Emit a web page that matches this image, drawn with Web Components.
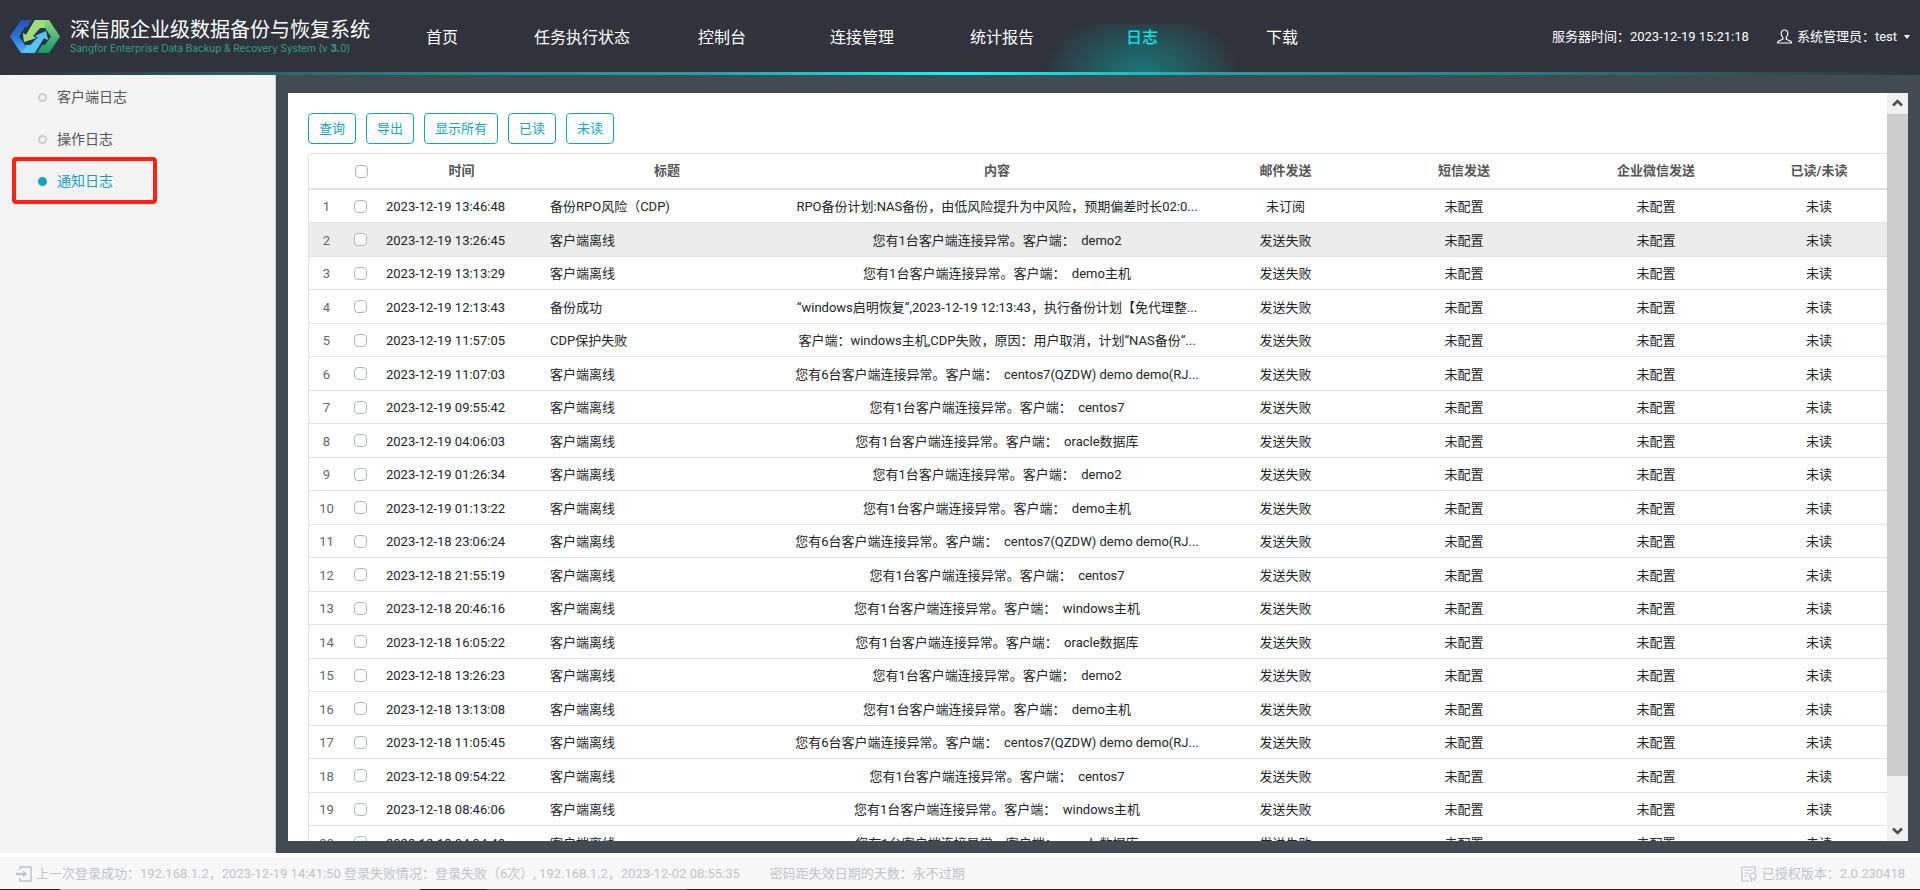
<!DOCTYPE html>
<html lang="zh-CN">
<head>
<meta charset="utf-8">
<title>深信服企业级数据备份与恢复系统</title>
<style>
html, body { height: 100%; margin: 0; }
body { font: 13px/20px Roboto, "Noto Sans CJK SC", sans-serif; color: #212529; overflow: hidden; }
</style>
</head>
<body>
<backup-app></backup-app>

<template id="t-app">
<style>
:host { display: grid; grid-template-rows: 75px minmax(0, 1fr) auto; height: 100%; background: #fff; }
.mid { display: grid; grid-template-columns: 276px minmax(0, 1fr); min-height: 0; }
main { background: #434a51; padding: 18px 12px 13px; display: grid; min-height: 0; }
</style>
<app-header></app-header>
<div class="mid">
  <side-menu></side-menu>
  <main><log-panel></log-panel></main>
</div>
<app-footer></app-footer>
</template>

<template id="t-header">
<style>
:host { display: flex; flex-direction: column; background: #30333b; color: #fff; }
.bar { flex: 1; display: flex; align-items: center; }
.brand { display: flex; align-items: center; width: 372px; padding-left: 10px; box-sizing: border-box; }
.brand svg { margin-right: 10px; flex: none; }
.name { font-size: 20px; line-height: 24px; white-space: nowrap; }
.sub { font: 10px/12px Inter, sans-serif; color: #31a083; white-space: nowrap; }
.sub b { font-weight: 700; }
nav { display: flex; flex: 1; align-self: stretch; }
.right { display: flex; align-items: center; padding: 2px 10px 0 0; white-space: nowrap; }
.user { display: flex; align-items: center; margin-left: 28px; padding: 0; border: 0; background: none; color: inherit; font: inherit; }
.user svg { margin-right: 5px; }
.user i { border: 3px solid transparent; border-top: 4px solid #fff; border-bottom: 0; margin-left: 7px; }
.line { height: 3px; background: linear-gradient(90deg, #30333b 0, #1e8f91 25%, #1fa3a4 37%, #00fff9 50%, #1fa3a4 63%, #1e8f91 75%, #30333b 100%); }
</style>
<div class="bar">
  <div class="brand">
    <svg width="50" height="33" viewBox="0 0 50 33">
      <defs>
        <linearGradient id="b" x1="0" y1="0" x2="0" y2="1"><stop offset="0" stop-color="#1f52b0"/><stop offset=".5" stop-color="#2a75dc"/><stop offset="1" stop-color="#45b5ee"/></linearGradient>
        <linearGradient id="g" x1="0" y1="0" x2="0" y2="1"><stop offset="0" stop-color="#8ed67c"/><stop offset=".5" stop-color="#4fb87c"/><stop offset="1" stop-color="#149a6c"/></linearGradient>
      </defs>
      <path fill="url(#b)" d="M11 0h11l-5 7h-2L9 16.500l6 8.500h5l8-8-4-1 12-5 2 9-4-2-9 15H11L0 16.500z"/>
      <path fill="url(#g)" d="M39 33H27l5-8h3l6-8.500L35 8h-5l-8 8 4 2-12 4-1-9 3 2L25 0h14l11 16.500z"/>
      <path fill="#58c4f5" d="M12 33l5-8h4l7-8-3-1 11-5 2 9-4-2-10 15z"/>
      <path fill="#9bdc7b" d="M25 0h12l-3 8h-4l-7 8 3 2-12 4-1-9 3 2z"/>
    </svg>
    <div><div class="name">深信服企业级数据备份与恢复系统</div>
    <div class="sub">Sangfor Enterprise Data Backup &amp; Recovery System (v <b>3.</b>0)</div></div>
  </div>
  <nav>
    <nav-item>首页</nav-item><nav-item>任务执行状态</nav-item><nav-item>控制台</nav-item><nav-item>连接管理</nav-item><nav-item>统计报告</nav-item><nav-item active>日志</nav-item><nav-item>下载</nav-item>
  </nav>
  <div class="right">
    <span>服务器时间：2023-12-19 15:21:18</span>
    <button class="user" type="button">
      <svg width="15" height="16" viewBox="0 0 15 16" fill="none" stroke="#fff" stroke-width="1.200"><path d="M7.500 1C5.300 1 4 2.500 4.200 4.800c.1 1.500.7 2.700 1.600 3.600v1.800L1.300 12.300c-.5.300-.7.800-.7 1.700h13.800c0-.9-.2-1.400-.7-1.700L9.200 10.200V8.400c.9-.9 1.500-2.100 1.600-3.600C11 2.500 9.700 1 7.500 1z"/></svg>
      系统管理员：test<i></i>
    </button>
  </div>
</div>
<div class="line"></div>
</template>

<template id="t-nav">
<style>
:host { display: flex; width: 140px; justify-content: center; align-items: center; position: relative; font-size: 16px; }
a { color: #fff; text-decoration: none; padding-top: 4px; white-space: nowrap; position: relative; }
:host([active]) a { color: #00e4e4; font-weight: 500; }
:host([active])::before { content: ""; position: absolute; left: -28px; right: -28px; bottom: 0; height: 48px;
  background: radial-gradient(ellipse 98px 60px at 50% 100%, #1c757a 0, #225d61 40%, #2b454c 75%, rgba(48,51,59,0) 100%); }
</style>
<a href="#"><slot></slot></a>
</template>

<template id="t-side">
<style>
:host { display: block; background: #f3f3f3; border-right: 1px solid #ccc; padding-top: 1px; }
</style>
<side-item>客户端日志</side-item><side-item>操作日志</side-item><side-item active>通知日志</side-item>
</template>

<template id="t-sideitem">
<style>
:host { display: block; position: relative; font-size: 14px; }
a { display: flex; align-items: center; height: 42px; padding-left: 38px; color: #555; text-decoration: none; }
i { width: 5px; height: 5px; border: 2px solid #c8d0d6; border-radius: 50%; margin-right: 10px; }
:host([active]) a { color: #17a2b8; }
:host([active]) i { background: #17a2b8; border-color: #17a2b8; }
:host([active])::after { content: ""; position: absolute; left: 12px; top: -3px; width: 137px; height: 39px; border: 4px solid #ff2113; border-radius: 4px; }
</style>
<a href="#"><i></i><slot></slot></a>
</template>

<template id="t-panel">
<style>
:host { display: grid; grid-template-columns: minmax(0, 1fr) 21px; background: #fff; min-height: 0; }
.body { overflow: hidden; padding: 20px 0 0 20px; min-height: 0; }
.tools { display: flex; gap: 10px; margin-bottom: 9px; }
</style>
<div class="body">
  <div class="tools"><tool-button>查询</tool-button><tool-button>导出</tool-button><tool-button>显示所有</tool-button><tool-button>已读</tool-button><tool-button>未读</tool-button></div>
  <log-table></log-table>
</div>
<scroll-bar></scroll-bar>
</template>

<template id="t-button">
<style>
:host { display: block; }
button { height: 31px; padding: 0 10px; border: 1px solid #17a2b8; border-radius: 4px; background: #fff; color: #17a2b8; font: inherit; display: block; }
</style>
<button type="button"><slot></slot></button>
</template>

<template id="t-scroll">
<style>
:host { display: flex; flex-direction: column; background: #f0f0f0; min-height: 0; }
svg { flex: none; display: block; }
.thumb { flex: 662; background: #cdcdcd; }
.rest { flex: 44; }
</style>
<svg width="21" height="21" viewBox="0 0 21 21"><path d="M6 12.500l4.500-4.500 4.500 4.500" fill="none" stroke="#505050" stroke-width="2.600"/></svg>
<div class="thumb"></div><div class="rest"></div>
<svg width="21" height="21" viewBox="0 0 21 21"><path d="M6 8.500l4.500 4.500 4.500-4.500" fill="none" stroke="#505050" stroke-width="2.600"/></svg>
</template>

<template id="t-table">
<style>
:host { display: block; border: 1px solid #dee2e6; border-right: 0; border-radius: 5px 0 0 0; }
table { width: 100%; table-layout: fixed; border-collapse: separate; border-spacing: 0; }
th, td { padding: 2px 0 0; box-sizing: border-box; text-align: center; white-space: nowrap; overflow: hidden; border-bottom: 1px solid #dee2e6; }
th { height: 36px; color: #555; font-weight: 700; border-bottom-width: 2px; padding: 0; }
td { height: 33px; line-height: 18px; }
tr:nth-child(even) td { height: 34px; }
tr.hover td { background: #ececec; }
td:first-child { color: #666; }
td:nth-child(3) { text-align: left; padding-left: 7px; }
td:nth-child(4) { text-align: left; padding-left: 6px; }
input { appearance: none; display: block; width: 13px; height: 13px; margin: 0 auto; border: 1px solid #adb5bd; border-radius: 4px; background: #fff; }
td:nth-child(2) { padding: 0 2px 0 0; }
</style>
<table>
<colgroup><col style="width:35px"><col style="width:35px"><col style="width:165px"><col style="width:246px"><col style="width:414px"><col style="width:163px"><col style="width:194px"><col style="width:190px"><col style="width:136px"></colgroup>
<thead><tr><th></th><th><input type="checkbox" aria-label="全选"></th><th>时间</th><th>标题</th><th>内容</th><th>邮件发送</th><th>短信发送</th><th>企业微信发送</th><th>已读/未读</th></tr></thead>
<tbody></tbody>
</table>
</template>

<template id="t-footer">
<style>
:host { display: block; border-top: 4px solid #fff; margin-top: -1px; color: #c0c4cc; background: #f7f7f7; }
.row { display: flex; align-items: center; box-sizing: border-box; height: 33px; padding: 2px 15px 0 16px; margin-top: -1px; white-space: pre; }
svg { margin-right: 4px; flex: none; }
.days { margin-left: 30px; }
.ver { margin-left: auto; display: flex; align-items: center; }
.edge { height: 1px; background: linear-gradient(90deg, #222 60px, #bbb 60px 420px, #222 420px 486px, #555 486px 686px, #222 686px); }
</style>
<div class="row">
  <svg width="16" height="16" viewBox="0 0 16 16" fill="none" stroke="#c0c4cc" stroke-width="1.500"><path d="M4 4V1h11v14H4v-3"/><path d="M0 8h8" stroke-width="2.400"/><path d="M7 4.500L11.500 8 7 11.500z" fill="#c0c4cc" stroke="none"/></svg><span>上一次登录成功：192.168.1.2，2023-12-19 14:41:50 登录失败情况：登录失败（6次）, 192.168.1.2，2023-12-02 08:55:35</span><span class="days">密码距失效日期的天数：永不过期</span><span class="ver"><svg width="17" height="16" viewBox="0 0 17 16" fill="none" stroke="#c0c4cc" stroke-width="1.200"><path d="M14 6V1H1v14h7M3.500 4h8M3.500 7h4M3.500 10h3"/><circle cx="12" cy="10" r="3"/><path d="M10.500 12.500V15.500M13.500 12.500V15.500"/></svg>已授权版本：2.0.230418</span>
</div>
<div class="edge"></div>
</template>

<script>
const define = (name, id, setup) => customElements.define(name, class extends HTMLElement {
  constructor() {
    super();
    const root = this.attachShadow({ mode: "open" });
    root.append(document.getElementById(id).content.cloneNode(true));
    if (setup) setup(root);
  }
});

const lost = (n, who) => `您有${n}台客户端连接异常。客户端：\u00a0 ${who}`;
const off = "客户端离线", many = "centos7(QZDW) demo demo(RJ...";
const rows = [
  ["2023-12-19 13:46:48", "备份RPO风险（CDP)", "RPO备份计划:NAS备份，由低风险提升为中风险，预期偏差时长02:0...", "未订阅"],
  ["2023-12-19 13:26:45", off, lost(1, "demo2")],
  ["2023-12-19 13:13:29", off, lost(1, "demo主机")],
  ["2023-12-19 12:13:43", "备份成功", "“windows启明恢复“,2023-12-19 12:13:43，执行备份计划【免代理整..."],
  ["2023-12-19 11:57:05", "CDP保护失败", "客户端：windows主机,CDP失败，原因：用户取消，计划“NAS备份“..."],
  ["2023-12-19 11:07:03", off, lost(6, many)],
  ["2023-12-19 09:55:42", off, lost(1, "centos7")],
  ["2023-12-19 04:06:03", off, lost(1, "oracle数据库")],
  ["2023-12-19 01:26:34", off, lost(1, "demo2")],
  ["2023-12-19 01:13:22", off, lost(1, "demo主机")],
  ["2023-12-18 23:06:24", off, lost(6, many)],
  ["2023-12-18 21:55:19", off, lost(1, "centos7")],
  ["2023-12-18 20:46:16", off, lost(1, "windows主机")],
  ["2023-12-18 16:05:22", off, lost(1, "oracle数据库")],
  ["2023-12-18 13:26:23", off, lost(1, "demo2")],
  ["2023-12-18 13:13:08", off, lost(1, "demo主机")],
  ["2023-12-18 11:05:45", off, lost(6, many)],
  ["2023-12-18 09:54:22", off, lost(1, "centos7")],
  ["2023-12-18 08:46:06", off, lost(1, "windows主机")],
  ["2023-12-18 04:04:48", off, lost(1, "oracle数据库")]
];

define("nav-item", "t-nav");
define("app-header", "t-header");
define("side-item", "t-sideitem");
define("side-menu", "t-side");
define("tool-button", "t-button");
define("scroll-bar", "t-scroll");
define("log-table", "t-table", root => {
  root.querySelector("tbody").innerHTML = rows.map(([time, title, text, mail = "发送失败"], i) =>
    `<tr${i === 1 ? ' class="hover"' : ""}><td>${i + 1}</td><td><input type="checkbox" aria-label="选择第${i + 1}行"></td><td>${time}</td><td>${title}</td><td>${text}</td><td>${mail}</td><td>未配置</td><td>未配置</td><td>未读</td></tr>`).join("");
});
define("log-panel", "t-panel");
define("app-footer", "t-footer");
define("backup-app", "t-app");
</script>
</body>
</html>
